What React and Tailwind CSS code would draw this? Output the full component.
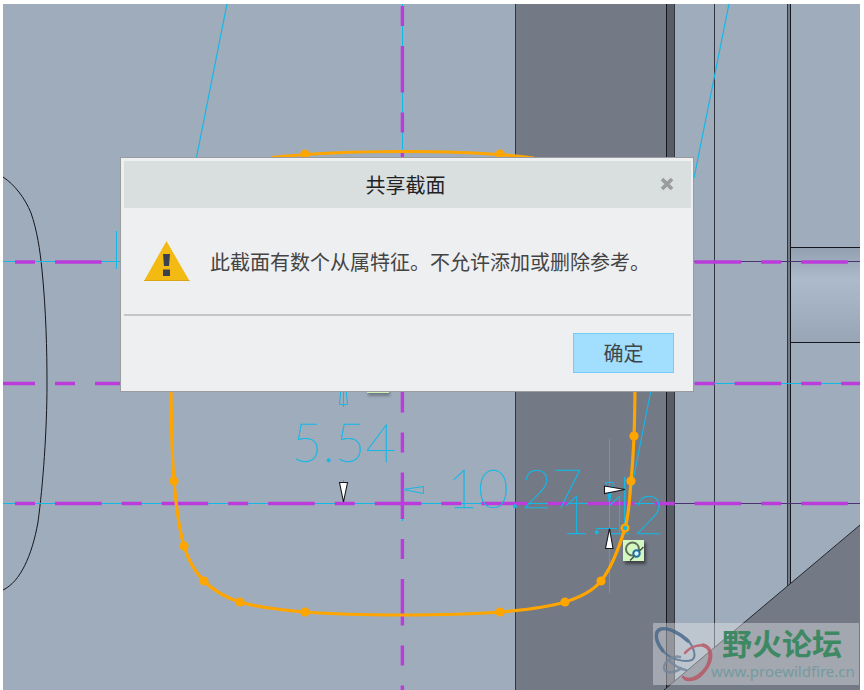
const CYAN = '#14b8e6';
const ORANGE = '#ffa500';
const MAGENTA = '#bb3cdb';
const EDGE = '#31363f';

const knots = [
  [171, 330], [171, 392], [174, 481], [184, 546], [204, 581], [240, 602], [305, 612],
  [402, 615], [500, 612], [565, 602], [601, 581], [625, 528], [631, 481], [634, 436], [635, 385], [635, 330],
];

const dots = [
  [174, 481], [184, 546], [204, 581], [240, 602], [305, 612], [500, 612],
  [565, 602], [601, 581], [631, 481], [634, 436], [305, 154], [500, 154],
];

function spline(p) {
  let d = `M${p[0][0]} ${p[0][1]}`;
  for (let i = 0; i < p.length - 1; i++) {
    const a = p[i - 1] || p[i];
    const b = p[i];
    const c = p[i + 1];
    const e = p[i + 2] || c;
    const span = Math.hypot(c[0] - b[0], c[1] - b[1]);
    const k1 = span / (Math.hypot(b[0] - a[0], b[1] - a[1]) + span || 1) / 3;
    const k2 = span / (Math.hypot(e[0] - c[0], e[1] - c[1]) + span || 1) / 3;
    d += `C${b[0] + (c[0] - a[0]) * k1} ${b[1] + (c[1] - a[1]) * k1} ${c[0] - (e[0] - b[0]) * k2} ${c[1] - (e[1] - b[1]) * k2} ${c[0]} ${c[1]}`;
  }
  return d;
}

function Centerline({ d }) {
  return <path d={d} stroke={MAGENTA} strokeWidth="3.4" strokeDasharray="46.6 20 20 20" fill="none" />;
}

function Dimension({ x, y, children }) {
  return (
    <text
      x={x}
      y={y}
      textAnchor="middle"
      fill={CYAN}
      stroke={CYAN}
      strokeWidth="0.4"
      className="font-['Lato','Roboto',sans-serif] text-[53px] font-thin"
    >
      {children}
    </text>
  );
}

function Model() {
  return (
    <g fill="none">
      <rect x="0" y="0" width="864" height="694" fill="#9facbc" />
      <rect x="515" y="0" width="151" height="694" fill="#737985" />
      <rect x="667" y="0" width="7" height="694" fill="#575c67" />
      <rect x="788" y="0" width="2" height="694" fill="#747d89" />
      <rect x="791" y="248" width="80" height="94" fill="url(#bore)" />
      <path d="M664 690L860 525V690Z" fill="#737985" />
      <path d="M515.5 4V690M674.5 4V681M714.5 4V647M787.5 4V586" stroke={EDGE} />
      <path d="M666.5 4V688M790.5 4V584M790 247.5H860M790 342.5H860" stroke="#14171d" />
      <path d="M664 690L860 525" stroke="#252930" />
      <path d="M3 177C14 184 25 198 31 213C37 230 40 250 42 270C46 310 47 350 47 384C47 430 43 485 38 522C32 556 20 582 3 590" stroke="#15181d" />
    </g>
  );
}

function Sketch() {
  return (
    <g fill="none">
      <g stroke={CYAN}>
        <path d="M227 4L196 160M729 4L694 178M651 390L630 496" strokeWidth="1.2" />
        <path d="M116.5 231V269M402.5 4V157M402.5 518V521M3 261.5H121M690 383.5H860M3 503.5H660" />
      </g>
      <path d="M690 261.5H860M674 503.5H860" stroke="#4c3274" />
      <Centerline d="M402.4 -60.6V690" />
      <Centerline d="M-51.6 262H860" />
      <Centerline d="M-11.6 383.5H860" />
      <Centerline d="M-51.6 503.5H860" />

      <Dimension x="344" y="462">5.54</Dimension>
      <Dimension x="515" y="508">10.27</Dimension>
      <Dimension x="612" y="534">1.12</Dimension>

      <g stroke={CYAN}>
        <path d="M341 388L339.5 404.500H347.500L346 388M343.500 388V407M343.500 480V484" />
        <path d="M403 489.500L423.500 486.500V493.500Z" />
        <path d="M605.500 482.500H613.500L609.500 502ZM607 486L609.500 502L611 486M609.500 439V593M596 528.500H617" />
        <path d="M624.800 477V525" strokeWidth="1.5" />
      </g>

      <path d="M272 157.500C315 153 360 151.500 402 151.500C445 151.500 495 153 534 158" stroke={ORANGE} strokeWidth="3.2" />
      <path d={spline(knots)} stroke={ORANGE} strokeWidth="3.2" />
      {dots.map(([x, y]) => (
        <circle key={`${x}-${y}`} cx={x} cy={y} r="4.6" fill={ORANGE} />
      ))}
      <circle cx="625" cy="528" r="3.4" fill={CYAN} stroke={ORANGE} strokeWidth="2.4" />

      <g fill="#fff" stroke="#16181c" strokeWidth="1.1">
        <path d="M339.500 482.500H347.500L343.500 502Z" />
        <path d="M604.500 486L625 489.500L604.500 493.500Z" />
        <path d="M609.500 528.500L613 548.500H605.500Z" />
      </g>

      <rect x="368" y="374" width="22" height="22" fill="#000" opacity=".28" filter="url(#soft)" />
      <rect x="367" y="372" width="22" height="21" fill="#cfeebc" />

      <rect x="625" y="543" width="21" height="21" fill="#000" opacity=".45" filter="url(#soft)" />
      <rect x="623" y="540" width="21" height="21" fill="#d3f8c2" />
      <circle cx="632.500" cy="549" r="6.500" stroke="#61705c" strokeWidth="2" />
      <path d="M630 560.500L643.500 547" stroke="#444d44" strokeWidth="1.500" />
      <circle cx="636.500" cy="553.500" r="3.200" fill="#d8f2ff" stroke="#1f6e9c" strokeWidth="2" />
    </g>
  );
}

function Watermark() {
  return (
    <g>
      <rect x="653" y="623" width="206" height="62" fill="#e6e7e9" opacity=".42" />
      <g fill="none" opacity=".8" strokeLinecap="round">
        <path d="M687 639C679 632 667 627 661 629C654 632 656 643 663 651C670 659 684 663 692 660C697 657 694 647 687 639Z" stroke="#55718f" strokeWidth="2" />
        <path d="M663 651C655 641 654 631 661 629C668 627 681 634 688 641" stroke="#456688" strokeWidth="3.500" />
        <path d="M680 657C672 655 664 662 664 668C665 675 677 672 681 668M668 660C674 664 677 669 686 670" stroke="#73859a" strokeWidth="2.500" />
        <path d="M685 653C691 646 702 643 707 647C713 653 708 669 700 676C694 681 687 681 683 677" stroke="#b95362" strokeWidth="2.500" />
        <path d="M703 645C713 648 712 659 707 667C702 675 693 681 686 679" stroke="#b95362" strokeWidth="3.500" />
      </g>
      <text x="722" y="655" fill="#3e8964" className="font-['Noto_Sans_CJK_SC',sans-serif] text-[30px] font-bold">
        野火论坛
      </text>
      <text x="711" y="677" fill="#739ba0" className="font-['Noto_Sans','Open_Sans',sans-serif] text-[15px]">
        www.proewildfire.cn
      </text>
    </g>
  );
}

function Viewport() {
  return (
    <svg viewBox="3 4 857 686" preserveAspectRatio="xMinYMin slice" className="block h-full w-full" aria-hidden="true">
      <defs>
        <linearGradient id="bore" x1="0" y1="0" x2="0" y2="1">
          <stop offset="0" stopColor="#93a0b0" />
          <stop offset=".33" stopColor="#adbacb" />
          <stop offset=".5" stopColor="#a8b5c6" />
          <stop offset="1" stopColor="#98a5b5" />
        </linearGradient>
        <filter id="soft" x="-30%" y="-30%" width="160%" height="160%">
          <feGaussianBlur stdDeviation="1.8" />
        </filter>
      </defs>
      <Model />
      <Sketch />
      <Watermark />
    </svg>
  );
}

function WarningIcon() {
  return (
    <svg viewBox="0 0 46 40" className="h-10 w-[46px] shrink-0" aria-hidden="true">
      <path d="M22.500 0L45.500 40H0Z" fill="#f2ba13" />
      <path d="M0 39.500H45.500" stroke="#d9a514" />
      <path d="M19 13H26L25 25H20ZM19 28.500H26V35H19Z" fill="#3b4150" />
    </svg>
  );
}

function SharedSectionDialog() {
  return (
    <section
      role="alertdialog"
      aria-labelledby="dialog-title"
      aria-describedby="dialog-message"
      className="absolute left-[120px] top-[157px] w-[574px] border border-[#999c9f] bg-[#eeeff1] pl-[3px] pr-0.5 pt-[3px]"
    >
      <header className="relative flex h-[47px] items-center justify-center bg-[#d9dedf] pr-1">
        <h1 id="dialog-title" className="text-[20px] leading-[30px] text-[#222]">共享截面</h1>
        <button type="button" aria-label="关闭" className="absolute right-[15px] top-[14px] p-0.5">
          <svg viewBox="0 0 14 14" className="block size-[14px]" aria-hidden="true">
            <path d="M2 2L12 12M12 2L2 12" stroke="#9b9c9c" strokeWidth="3.800" />
          </svg>
        </button>
      </header>
      <div className="flex h-[108px] items-center gap-5 border-b-2 border-[#c3c5c7] pl-5">
        <WarningIcon />
        <p id="dialog-message" className="whitespace-nowrap pt-0.5 text-[20px] leading-[30px] text-[#444]">
          此截面有数个从属特征。不允许添加或删除参考。
        </p>
      </div>
      <footer className="flex justify-end pb-[18px] pr-[17px] pt-[17px]">
        <button type="button" className="h-10 w-[101px] border border-[#74cdf8] bg-[#a2dffe] text-[20px] leading-[30px] text-[#3f464a]">
          确定
        </button>
      </footer>
    </section>
  );
}

export default function App() {
  return (
    <main className="relative h-screen overflow-hidden bg-white pl-[3px] pr-1 pt-1 font-['Noto_Sans_CJK_SC',sans-serif]">
      <Viewport />
      <SharedSectionDialog />
    </main>
  );
}
